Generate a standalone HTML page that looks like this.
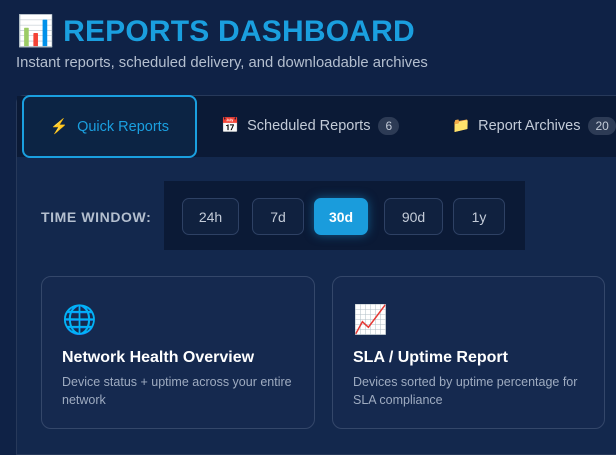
<!DOCTYPE html>
<html><head><style>
*{margin:0;padding:0;box-sizing:border-box}
body{width:616px;height:442px;overflow:hidden;background:#0f2246;font-family:"Liberation Sans",sans-serif;position:relative;color:#fff}
.a{position:absolute}
h1{position:absolute;left:17px;top:14px;font-size:30px;font-weight:bold;color:#1a9fdf;letter-spacing:0.2px;white-space:nowrap}
.sub{left:16px;top:55px;font-size:14.8px;color:#b4bfcf}
.panel{left:16px;top:95px;width:620px;height:360px;background:#13284d;border:1px solid #27395a;border-radius:8px 0 0 0}
.tabs{left:17px;top:96px;width:600px;height:61px;background:#0b1a36}
.qt{left:22px;top:95px;width:175px;height:63px;border:2px solid #1a9fdf;border-radius:8px;background:#0c2444;color:#1a9fdf;font-size:14.5px;display:flex;align-items:center;justify-content:center;gap:9px}
.tab{top:117px;font-size:14.5px;color:#c3cbd8;white-space:nowrap}
.badge{display:inline-block;background:#2d3b55;color:#c3cbd8;border-radius:10px;font-size:12px;padding:2px 7px;margin-left:8px}
.lbl{left:41px;top:209px;font-size:14px;font-weight:bold;color:#b4bfcf;letter-spacing:0.6px}
.tw{left:164px;top:181px;width:361px;height:69px;background:#0b1a36}
.b{top:197px;height:37px;border:1px solid #2e4164;border-radius:7px;background:#10213f;color:#c3cbd8;font-size:14px;display:flex;align-items:center;justify-content:center}
.on{background:#1a9cdc;border-color:#1a9cdc;color:#fff;font-weight:bold;box-shadow:0 0 10px rgba(26,156,220,.5)}
.card{top:276px;height:153px;border:1.5px solid #34476a;border-radius:10px;background:#15294f}
.card .ic{position:absolute;left:20px;top:26px;font-size:28px}
.card .t{position:absolute;left:20px;top:72px;font-size:16px;font-weight:bold;color:#fff;white-space:nowrap}
.card .d{position:absolute;left:20px;top:96px;font-size:12.5px;line-height:18px;color:#9eabc0;width:240px}
</style></head><body>
<h1>📊 REPORTS DASHBOARD</h1>
<div class="a sub">Instant reports, scheduled delivery, and downloadable archives</div>
<div class="a panel"></div>
<div class="a tabs"></div>
<div class="a qt"><span style="color:#f5b800">⚡</span><span>Quick Reports</span></div>
<div class="a tab" style="left:221px">📅&nbsp; Scheduled Reports<span class="badge">6</span></div>
<div class="a tab" style="left:452px">📁&nbsp; Report Archives<span class="badge">20</span></div>
<div class="a lbl">TIME WINDOW:</div>
<div class="a tw"></div>
<div class="a b" style="left:182px;width:57px;top:198px">24h</div>
<div class="a b" style="left:252px;width:52px;top:198px">7d</div>
<div class="a b on" style="left:314px;width:54px;top:198px">30d</div>
<div class="a b" style="left:384px;width:59px;top:198px">90d</div>
<div class="a b" style="left:453px;width:52px;top:198px">1y</div>
<div class="a card" style="left:41px;width:274px"><div class="ic">🌐</div><div class="t">Network Health Overview</div><div class="d">Device status + uptime across your entire network</div></div>
<div class="a card" style="left:332px;width:273px"><div class="ic">📈</div><div class="t">SLA / Uptime Report</div><div class="d">Devices sorted by uptime percentage for SLA compliance</div></div>
</body></html>
